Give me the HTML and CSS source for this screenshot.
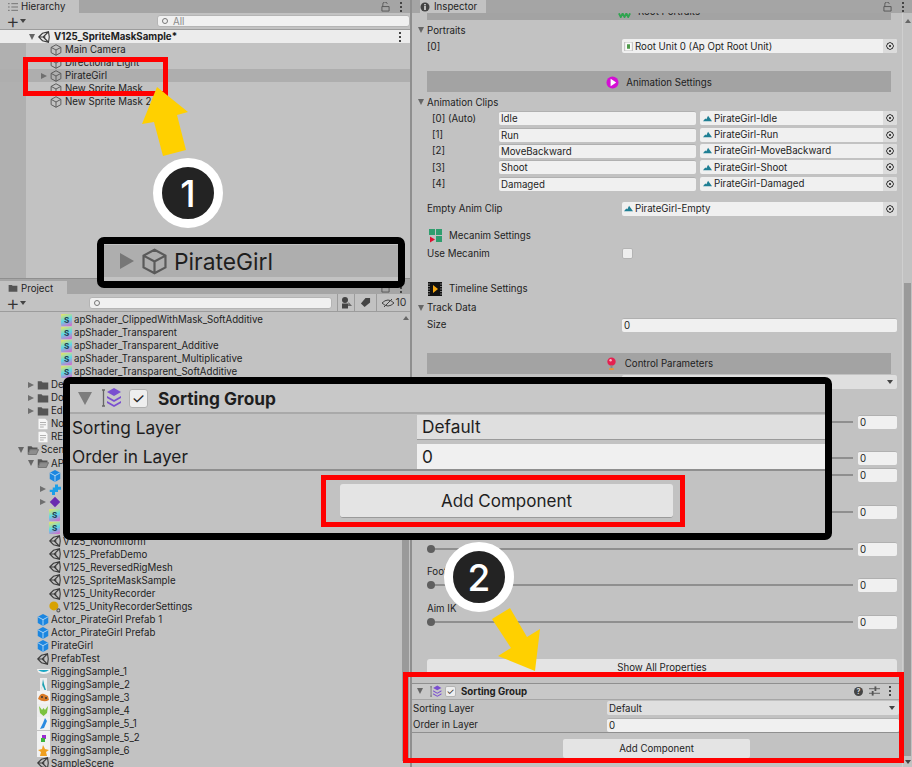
FILE: index.html
```html
<!DOCTYPE html>
<html lang="en">
<head>
    <meta charset="UTF-8">
    <meta name="viewport" content="width=device-width, initial-scale=1.0">
    <title>Sorting Group</title>
    <link rel="stylesheet" href="styles.css">
</head>
<body>

<!-- shared icons -->
<svg class="defs">
    <symbol id="cube" viewBox="0 0 16 16">
        <path d="M8 1 14.5 4.5V11.5L8 15 1.5 11.5V4.5ZM1.5 4.5 8 8 14.5 4.5M8 8V15" fill="none" stroke="#5a5a5a" stroke-width="1.3"/>
    </symbol>
    <symbol id="scene" viewBox="0 0 16 16">
        <path d="M1 8 6 3 14 1 15 8 14 15 6 13ZM1 8H7L14 1M7 8 14 15M7 8 10 8" fill="none" stroke="#3c3c3c" stroke-width="1.5"/>
    </symbol>
    <symbol id="prefab" viewBox="0 0 16 16">
        <path d="M8 0 15 3.6V12L8 16 1 12V3.6Z" fill="#1b86e0"/>
        <path d="M1.5 4 8 7.5 14.5 4M8 7.5V15.5" fill="none" stroke="#d8ecfb" stroke-width="1"/>
    </symbol>
    <symbol id="folder" viewBox="0 0 16 16">
        <path d="M1 3H6L7.5 4.5H15V14H1Z" fill="#555"/>
    </symbol>
    <symbol id="folder-open" viewBox="0 0 16 16">
        <path d="M1 3H6L7.5 4.5H14V7H4L1 14Z" fill="#555"/>
        <path d="M4 7.5H15.5L12.5 14H1.5Z" fill="#8d8d8d" stroke="#555" stroke-width=".8"/>
    </symbol>
    <symbol id="doc" viewBox="0 0 16 16">
        <path d="M2 1H11L14 4V15H2Z" fill="#f7f7f7"/>
        <path d="M4 6H12M4 9H12M4 12H9" stroke="#9a9a9a"/>
    </symbol>
    <symbol id="clip" viewBox="0 0 16 16">
        <path d="M0 13 4 8 6 9.5 9 3 16 13Z" fill="#1f7f94"/>
    </symbol>
    <symbol id="layers" viewBox="0 0 22 22">
        <path d="M2 3H5M3.5 3V19M2 19H5" fill="none" stroke="#666" stroke-width="1.3"/>
        <path d="M14 1 21 5 14 9 7 5Z" fill="#7a4fd0"/>
        <path d="M7 9 14 13 21 9 21 11 14 15 7 11Z" fill="#7a4fd0"/>
        <path d="M7 14 14 18 21 14 21 16 14 20 7 16Z" fill="#7a4fd0"/>
    </symbol>
</svg>

<div class="app">

    <div class="left-col">
        <!-- hierarchy -->
        <section class="panel hierarchy">
            <div class="tabbar">
                <div class="tab hier-tab">
                    <svg class="tab-ico" viewBox="0 0 12 10"><path d="M0 1H2M4 1H12M0 5H2M4 5H12M0 9H2M4 9H12" stroke="#666" stroke-width="1"/></svg>
                    Hierarchy
                </div>
                <div class="tab-tools">
                    <svg class="lock" viewBox="0 0 10 11"><path d="M2 5V3A2.5 2.5 0 0 1 7 2M1 5H9V10H1Z" fill="none" stroke="#555"/></svg>
                    <span class="dots"></span>
                </div>
            </div>
            <div class="toolbar">
                <span class="plus">+</span><i class="tri-down small"></i>
                <div class="search hier-search"><span class="mag"></span>All</div>
            </div>
            <div class="scene-head">
                <i class="tri-down"></i>
                <svg class="ico"><use href="#scene"/></svg>
                <b>V125_SpriteMaskSample*</b>
                <span class="dots"></span>
            </div>
            <div class="hier-rows">
                <div class="hrow"><span class="tw"></span><svg class="ico"><use href="#cube"/></svg>Main Camera</div>
                <div class="hrow"><span class="tw"></span><svg class="ico"><use href="#cube"/></svg>Directional Light</div>
                <div class="hrow selected"><span class="tw"><i class="tri-right"></i></span><svg class="ico"><use href="#cube"/></svg>PirateGirl</div>
                <div class="hrow"><span class="tw"></span><svg class="ico"><use href="#cube"/></svg>New Sprite Mask</div>
                <div class="hrow"><span class="tw"></span><svg class="ico"><use href="#cube"/></svg>New Sprite Mask 2</div>
            </div>
        </section>

        <!-- project -->
        <section class="panel project">
            <div class="tabbar">
                <div class="tab proj-tab">
                    <svg class="tab-ico"><use href="#folder"/></svg>
                    Project
                </div>
                <div class="tab-tools">
                    <svg class="lock" viewBox="0 0 10 11"><path d="M2 5V3A2.5 2.5 0 0 1 7 2M1 5H9V10H1Z" fill="none" stroke="#555"/></svg>
                    <span class="dots"></span>
                </div>
            </div>
            <div class="toolbar">
                <span class="plus">+</span><i class="tri-down small"></i>
                <div class="search proj-search"><span class="mag"></span></div>
                <div class="tool-btn by-type">
                    <svg viewBox="0 0 12 12" width="12" height="12"><circle cx="5" cy="3" r="3" fill="#444"/><rect x="2" y="6.5" width="6" height="5" fill="#444"/><path d="M8.5 5 12 9H8Z" fill="#666"/></svg>
                </div>
                <div class="tool-btn by-label">
                    <svg viewBox="0 0 12 12" width="11" height="11"><path d="M6 1H11V6L5 11 1 7Z" fill="#444"/></svg>
                </div>
                <div class="tool-btn hidden-count">
                    <svg viewBox="0 0 14 10" width="14" height="10"><path d="M1 5Q7-1 13 5 7 11 1 5ZM3 9 11 1" fill="none" stroke="#444"/></svg>
                    10
                </div>
            </div>
            <div class="file-area">
                <div class="file-list">
                    <div class="frow l2"><span class="tw"></span><span class="script">S</span>apShader_ClippedWithMask_SoftAdditive</div>
                    <div class="frow l2"><span class="tw"></span><span class="script">S</span>apShader_Transparent</div>
                    <div class="frow l2"><span class="tw"></span><span class="script">S</span>apShader_Transparent_Additive</div>
                    <div class="frow l2"><span class="tw"></span><span class="script">S</span>apShader_Transparent_Multiplicative</div>
                    <div class="frow l2"><span class="tw"></span><span class="script">S</span>apShader_Transparent_SoftAdditive</div>
                    <div class="frow l0"><span class="tw"><i class="tri-right"></i></span><svg class="ico"><use href="#folder"/></svg>De</div>
                    <div class="frow l0"><span class="tw"><i class="tri-right"></i></span><svg class="ico"><use href="#folder"/></svg>Do</div>
                    <div class="frow l0"><span class="tw"><i class="tri-right"></i></span><svg class="ico"><use href="#folder"/></svg>Ed</div>
                    <div class="frow l0"><span class="tw"></span><svg class="ico"><use href="#doc"/></svg>No</div>
                    <div class="frow l0"><span class="tw"></span><svg class="ico"><use href="#doc"/></svg>RE</div>
                    <div class="frow ls"><span class="tw"><i class="tri-down"></i></span><svg class="ico"><use href="#folder-open"/></svg>Scen</div>
                    <div class="frow l0"><span class="tw"><i class="tri-down"></i></span><svg class="ico"><use href="#folder-open"/></svg>AP</div>
                    <div class="frow l1"><span class="tw"></span><svg class="ico"><use href="#prefab"/></svg></div>
                    <div class="frow l1"><span class="tw"><i class="tri-right"></i></span>
                        <svg class="ico" viewBox="0 0 16 16"><path d="M1 9H5V6H8V2H12V5H16V9H12V12H8V16H4V12H1Z" fill="#1b9fe8"/></svg></div>
                    <div class="frow l1"><span class="tw"><i class="tri-right"></i></span>
                        <svg class="ico" viewBox="0 0 16 16"><path d="M8 1 15 8 8 15 1 8Z" fill="#6a2bb0"/></svg></div>
                    <div class="frow l1 thin"><span class="tw"></span><span class="script">S</span></div>
                    <div class="frow l1 thin"><span class="tw"></span><span class="script">S</span></div>
                    <div class="frow l1"><span class="tw"></span><svg class="ico"><use href="#scene"/></svg>V125_NonUniform</div>
                    <div class="frow l1"><span class="tw"></span><svg class="ico"><use href="#scene"/></svg>V125_PrefabDemo</div>
                    <div class="frow l1"><span class="tw"></span><svg class="ico"><use href="#scene"/></svg>V125_ReversedRigMesh</div>
                    <div class="frow l1"><span class="tw"></span><svg class="ico"><use href="#scene"/></svg>V125_SpriteMaskSample</div>
                    <div class="frow l1"><span class="tw"></span><svg class="ico"><use href="#scene"/></svg>V125_UnityRecorder</div>
                    <div class="frow l1"><span class="tw"></span>
                        <svg class="ico" viewBox="0 0 16 16"><circle cx="6.5" cy="6.5" r="6" fill="#d8a200"/><circle cx="12.5" cy="12.5" r="2" fill="none" stroke="#555" stroke-width="1.4"/></svg>V125_UnityRecorderSettings</div>
                    <div class="frow l0"><span class="tw"></span><svg class="ico"><use href="#prefab"/></svg>Actor_PirateGirl Prefab 1</div>
                    <div class="frow l0"><span class="tw"></span><svg class="ico"><use href="#prefab"/></svg>Actor_PirateGirl Prefab</div>
                    <div class="frow l0"><span class="tw"></span><svg class="ico"><use href="#prefab"/></svg>PirateGirl</div>
                    <div class="frow l0"><span class="tw"></span><svg class="ico"><use href="#scene"/></svg>PrefabTest</div>
                    <div class="frow l0"><span class="tw"></span>
                        <svg class="thumb" viewBox="0 0 13 13"><path d="M0 4H13V7Q6 11 1 7Z" fill="#f2f2f2"/><path d="M1 5H12Q7 9 1 5Z" fill="#19a6c4"/></svg>RiggingSample_1</div>
                    <div class="frow l0"><span class="tw"></span>
                        <svg class="thumb" viewBox="0 0 13 13"><rect x="3" width="7" height="13" fill="#eee"/><path d="M6 1 7 6 9 12H7.5L5.5 7 4.5 12Z" fill="#1a9fb0"/></svg>RiggingSample_2</div>
                    <div class="frow l0"><span class="tw"></span>
                        <svg class="thumb" viewBox="0 0 13 13"><rect width="13" height="13" fill="#f2f2f2"/><path d="M1 8Q3 2 7 3L11 5 12 9Q7 12 1 8Z" fill="#d87a28"/><circle cx="5" cy="6" r="1" fill="#333"/><circle cx="9" cy="7" r="1" fill="#333"/></svg>RiggingSample_3</div>
                    <div class="frow l0"><span class="tw"></span>
                        <svg class="thumb" viewBox="0 0 13 13"><rect width="13" height="13" fill="#eee"/><path d="M2 2 5 6 6.5 4 8 6 11 2 10 9 6.5 12 3 9Z" fill="#7cc23e"/></svg>RiggingSample_4</div>
                    <div class="frow l0"><span class="tw"></span>
                        <svg class="thumb" viewBox="0 0 13 13"><rect width="13" height="13" fill="#f2f2f2"/><path d="M8 1 10 4 7 11 3 12 6 6Z" fill="#2a8ae0"/></svg>RiggingSample_5_1</div>
                    <div class="frow l0"><span class="tw"></span>
                        <svg class="thumb" viewBox="0 0 13 13"><rect width="13" height="13" fill="#f2f2f2"/><rect x="5" y="4" width="4" height="4" fill="#9a2bd0"/><rect x="4" y="7" width="4" height="4" fill="#3cb43c"/></svg>RiggingSample_5_2</div>
                    <div class="frow l0"><span class="tw"></span>
                        <svg class="thumb" viewBox="0 0 13 13"><rect width="13" height="13" fill="#f2f2f2"/><path d="M6 1 8 5 12 6 9 8 10 12H3L4 8 1 6 5 5Z" fill="#efa020"/></svg>RiggingSample_6</div>
                    <div class="frow l0"><span class="tw"></span><svg class="ico"><use href="#scene"/></svg>SampleScene</div>
                </div>
                <div class="proj-scroll">
                    <i class="tri-up small"></i>
                    <div class="proj-thumb"></div>
                </div>
            </div>
        </section>
    </div>

    <!-- inspector -->
    <section class="panel inspector">
        <div class="tabbar">
            <div class="tab insp-tab">
                <svg class="tab-ico" viewBox="0 0 10 10"><circle cx="5" cy="5" r="4.5" fill="#444"/><rect x="4.2" y="4" width="1.6" height="4" fill="#ddd"/><rect x="4.2" y="2" width="1.6" height="1.4" fill="#ddd"/></svg>
                Inspector
            </div>
            <div class="tab-tools">
                <svg class="lock" viewBox="0 0 10 11"><path d="M2 5V3A2.5 2.5 0 0 1 7 2M1 5H9V10H1Z" fill="none" stroke="#555"/></svg>
                <span class="dots"></span>
            </div>
        </div>
        <div class="insp-body">
            <div class="insp-main">
                <div class="band band-first">
                    <svg class="band-ico" viewBox="0 0 14 14"><path d="M1 9 3 13 5 9 7 13 9 9 11 13 13 9" fill="none" stroke="#2fa44f" stroke-width="2"/></svg>
                    Root Portraits
                </div>
                <div class="prop fold mt2"><i class="tri-down"></i>Portraits</div>
                <div class="prop"><label>[0]</label>
                    <div class="objfield wide">
                        <svg class="obj-ico" viewBox="0 0 10 12"><rect width="10" height="12" fill="#fafafa" stroke="#aaa"/><rect x="3" y="3" width="4" height="6" fill="#4f9a4a"/></svg>
                        Root Unit 0 (Ap Opt Root Unit)<span class="pick"></span>
                    </div>
                </div>

                <div class="band mt17">
                    <svg class="band-ico" viewBox="0 0 14 14"><circle cx="7" cy="7" r="6.5" fill="#d40fd4"/><path d="M5 3 11 7 5 11Z" fill="#fff"/></svg>
                    Animation Settings
                </div>
                <div class="prop fold mt2"><i class="tri-down"></i>Animation Clips</div>
                <div class="clip-row"><span class="idx">[0] (Auto)</span><div class="text-field clip-name">Idle</div>
                    <div class="objfield clip-obj"><svg class="obj-ico"><use href="#clip"/></svg>PirateGirl-Idle<span class="pick"></span></div></div>
                <div class="clip-row"><span class="idx">[1]</span><div class="text-field clip-name">Run</div>
                    <div class="objfield clip-obj"><svg class="obj-ico"><use href="#clip"/></svg>PirateGirl-Run<span class="pick"></span></div></div>
                <div class="clip-row"><span class="idx">[2]</span><div class="text-field clip-name">MoveBackward</div>
                    <div class="objfield clip-obj"><svg class="obj-ico"><use href="#clip"/></svg>PirateGirl-MoveBackward<span class="pick"></span></div></div>
                <div class="clip-row"><span class="idx">[3]</span><div class="text-field clip-name">Shoot</div>
                    <div class="objfield clip-obj"><svg class="obj-ico"><use href="#clip"/></svg>PirateGirl-Shoot<span class="pick"></span></div></div>
                <div class="clip-row"><span class="idx">[4]</span><div class="text-field clip-name">Damaged</div>
                    <div class="objfield clip-obj"><svg class="obj-ico"><use href="#clip"/></svg>PirateGirl-Damaged<span class="pick"></span></div></div>

                <div class="prop mt9"><label>Empty Anim Clip</label>
                    <div class="objfield wide"><svg class="obj-ico"><use href="#clip"/></svg>PirateGirl-Empty<span class="pick"></span></div>
                </div>

                <div class="prop title mt11">
                    <svg class="title-ico" viewBox="0 0 14 14">
                        <rect x="1" y="0" width="6" height="6" fill="#2f9e6e"/><rect x="8" y="0" width="6" height="6" fill="#2f9e6e"/>
                        <rect x="8" y="7" width="6" height="6" fill="#2f9e6e"/><path d="M2 7.5 7 10.5 2 13.5Z" fill="#e01030"/>
                    </svg>Mecanim Settings
                </div>
                <div class="prop mt2"><label>Use Mecanim</label><span class="check"></span></div>

                <div class="prop title mt19">
                    <svg class="title-ico" viewBox="0 0 14 14">
                        <rect width="14" height="14" fill="#111"/><path d="M1 1.5V12.5M13 1.5V12.5" stroke="#ddd" stroke-dasharray="1 1.5"/><path d="M5 3 10 7 5 11Z" fill="#f4a814"/>
                    </svg>Timeline Settings
                </div>
                <div class="prop fold mt3"><i class="tri-down"></i>Track Data</div>
                <div class="prop mt1"><label>Size</label><div class="text-field wide">0</div></div>

                <div class="band mt20">
                    <svg class="band-ico" viewBox="0 0 14 14"><circle cx="7" cy="5" r="4.5" fill="#e5204f"/><circle cx="6" cy="3.5" r="1.3" fill="#f9b4c6"/><rect x="6" y="9" width="2" height="3" fill="#888"/><rect x="4.5" y="12" width="5" height="2" fill="#e8933c"/></svg>
                    Control Parameters
                </div>
                <div class="prop"><label></label><div class="dropdown wide end"><i class="tri-down small"></i></div></div>

                <div class="param first"><div class="slider"><span class="track"><i class="knob"></i></span><div class="text-field num">0</div></div></div>
                <div class="param"><div class="slider"><span class="track"><i class="knob"></i></span><div class="text-field num">0</div></div></div>
                <div class="param short"><div class="slider"><span class="track"><i class="knob"></i></span><div class="text-field num">0</div></div></div>
                <div class="param"><div class="slider"><span class="track"><i class="knob"></i></span><div class="text-field num">0</div></div></div>
                <div class="param"><div class="slider"><span class="track"><i class="knob"></i></span><div class="text-field num">0</div></div></div>
                <div class="param"><label>Foot</label><div class="slider"><span class="track"><i class="knob"></i></span><div class="text-field num">0</div></div></div>
                <div class="param"><label>Aim IK</label><div class="slider"><span class="track"><i class="knob"></i></span><div class="text-field num">0</div></div></div>

                <div class="show-all">Show All Properties</div>

                <div class="comp-head">
                    <i class="tri-down"></i>
                    <svg class="comp-ico"><use href="#layers"/></svg>
                    <span class="check checked">&#10003;</span>
                    <b>Sorting Group</b>
                    <span class="comp-tools">
                        <span class="help">?</span>
                        <svg viewBox="0 0 12 10" width="11" height="10"><path d="M0 2.5H12M0 7.5H12" stroke="#555"/><rect x="6" y="0" width="2" height="5" fill="#555"/><rect x="3" y="5" width="2" height="5" fill="#555"/></svg>
                        <span class="dots"></span>
                    </span>
                </div>
                <div class="comp-row"><label>Sorting Layer</label><div class="dropdown comp-field">Default<i class="tri-down small"></i></div></div>
                <div class="comp-row"><label>Order in Layer</label><div class="text-field comp-field">0</div></div>
                <div class="comp-foot"><div class="add-btn">Add Component</div></div>
            </div>
            <div class="insp-scroll">
                <i class="tri-up small"></i>
                <div class="insp-thumb"></div>
                <i class="tri-down small"></i>
            </div>
        </div>
    </section>
</div>

<!-- tutorial annotations lying over the editor -->
<svg class="arrow-two" viewBox="0 0 60 70" width="60" height="70"><path d="M4 14 22 3 39 32 52 24 47 66 10 51 23 43Z" fill="#ffd000"/></svg>

<div class="red-box box-hier"></div>
<div class="red-box box-comp"></div>

<svg class="arrow-one" viewBox="0 0 50 72" width="50" height="72"><path d="M16 0 47 25 36 28 45 63 22 69 13 35 1 37Z" fill="#ffd000"/></svg>

<div class="badge badge-one">1</div>
<div class="badge badge-two">2</div>

<div class="callout callout-girl">
    <div class="girl-row">
        <i class="big-tri"></i>
        <svg class="big-cube"><use href="#cube"/></svg>
        PirateGirl
    </div>
</div>

<div class="callout callout-group">
    <div class="group-head">
        <i class="big-tri down"></i>
        <svg class="big-layers"><use href="#layers"/></svg>
        <span class="big-check">&#10003;</span>
        <b>Sorting Group</b>
    </div>
    <div class="group-row"><label>Sorting Layer</label><div class="group-field drop">Default</div></div>
    <div class="group-row last"><label>Order in Layer</label><div class="group-field">0</div></div>
    <div class="group-foot">
        <div class="red-box box-add"><div class="big-add">Add Component</div></div>
    </div>
</div>

</body>
</html>
```
FILE: styles.css
```css
* {
    box-sizing: border-box;
}

html, body {
    margin: 0;
    padding: 0;
}

body {
    position: relative;
    width: 912px;
    height: 767px;
    overflow: hidden;
    font-family: "Inter", "Liberation Sans", sans-serif;
    font-size: 9.7px;
    color: #1e1e1e;
    background-color: #c2c2c2;
}

.defs {
    position: absolute;
    width: 0;
    height: 0;
}

.app {
    display: flex;
    height: 767px;
}

.left-col {
    display: flex;
    flex-direction: column;
    width: 412px;
    flex: none;
    border-right: 2px solid #8f8f8f;
}

.panel {
    display: flex;
    flex-direction: column;
    overflow: hidden;
}

.hierarchy {
    height: 279px;
    flex: none;
    border-bottom: 1px solid #8f8f8f;
}

.project {
    flex: 1;
}

.inspector {
    flex: 1;
}

/* tabs */
.tabbar {
    display: flex;
    justify-content: space-between;
    height: 13px;
    flex: none;
    background-color: #a5a5a5;
}

.project .tabbar {
    height: 15px;
    padding-top: 2px;
}

.tab {
    display: flex;
    align-items: center;
    gap: 3px;
    background-color: #c2c2c2;
    padding-left: 8px;
}

.hier-tab { width: 79px; }
.proj-tab { width: 67px; padding-top: 1px; }
.insp-tab { width: 66px; padding-left: 0; margin-left: 8px; gap: 4px; }

.tab-ico {
    width: 10px;
    height: 10px;
}

.tab-tools {
    display: flex;
    align-items: center;
    gap: 10px;
    padding-right: 8px;
}

.lock {
    width: 9px;
    height: 10px;
}

.dots {
    display: inline-block;
    width: 2px;
    height: 2px;
    background-color: #444;
    box-shadow: 0 -4px 0 #444, 0 4px 0 #444;
}

/* toolbars */
.toolbar {
    display: flex;
    align-items: center;
    height: 17px;
    flex: none;
    border-bottom: 1px solid #9c9c9c;
    padding-left: 6px;
}

.project .toolbar {
    height: 18px;
}

.plus {
    font-size: 21px;
    font-weight: 300;
    line-height: 14px;
    width: 14px;
    color: #333;
}

.search {
    display: flex;
    align-items: center;
    height: 12px;
    background-color: #f0f0f0;
    border-radius: 3px;
    border: 1px solid #b4b4b4;
    color: #8b8b8b;
    padding-left: 4px;
    gap: 5px;
}

.hier-search {
    margin-left: 131px;
    flex: 1;
}

.proj-search {
    margin-left: 63px;
    width: 243px;
}

.mag {
    width: 6px;
    height: 6px;
    border: 1px solid #777;
    border-radius: 50%;
}

.tool-btn {
    display: flex;
    align-items: center;
    justify-content: center;
    height: 17px;
    border-left: 1px solid #9c9c9c;
    color: #333;
}

.by-type { width: 17px; margin-left: 5px; }
.by-label { width: 22px; }
.hidden-count { flex: 1; gap: 1px; font-size: 10.5px; }

/* triangles */
.tri-down, .tri-right, .tri-up {
    display: inline-block;
    width: 0;
    height: 0;
    flex: none;
}

.tri-down {
    border-left: 3.5px solid transparent;
    border-right: 3.5px solid transparent;
    border-top: 6px solid #666;
}

.tri-right {
    border-top: 3.5px solid transparent;
    border-bottom: 3.5px solid transparent;
    border-left: 6px solid #6f6f6f;
}

.tri-up {
    border-left: 3px solid transparent;
    border-right: 3px solid transparent;
    border-bottom: 4px solid #666;
}

.tri-down.small {
    border-left-width: 3px;
    border-right-width: 3px;
    border-top-width: 4px;
    border-top-color: #444;
}

/* hierarchy rows */
.scene-head {
    display: flex;
    align-items: center;
    height: 13px;
    flex: none;
    background-color: #ececec;
    padding-left: 29px;
    padding-right: 9px;
}

.scene-head .ico {
    margin: 0 4px 0 3px;
}

.scene-head b {
    flex: 1;
}

.hier-rows {
    flex: 1;
    background: linear-gradient(to right, #b0b0b0 26px, #c2c2c2 26px);
}

.hrow {
    display: flex;
    align-items: center;
    height: 13px;
    padding-left: 41px;
}

.hrow.selected {
    background-color: #aeaeae;
}

.tw {
    display: flex;
    align-items: center;
    width: 9px;
    flex: none;
}

.ico {
    width: 12px;
    height: 12px;
    flex: none;
    margin-right: 3px;
}

/* project rows */
.file-area {
    display: flex;
    flex: 1;
    overflow: hidden;
}

.file-list {
    flex: 1;
    padding-top: 1px;
}

.frow {
    display: flex;
    align-items: center;
    height: 13.05px;
    white-space: nowrap;
}

.frow .ico {
    margin-right: 2px;
}

.ls { padding-left: 18px; }
.l0 { padding-left: 28px; }
.l1 { padding-left: 40px; }
.l2 { padding-left: 52px; }

.script {
    display: flex;
    align-items: center;
    justify-content: center;
    width: 11px;
    height: 12px;
    flex: none;
    margin-right: 2px;
    font-size: 8px;
    font-weight: 700;
    color: #1c3c50;
    border-radius: 1px;
    background: linear-gradient(160deg, #eee45e, #5fd6e6 50%, #de62c8);
}

.thumb {
    width: 13px;
    height: 13px;
    flex: none;
    margin-right: 1px;
}

.proj-scroll {
    display: flex;
    flex-direction: column;
    align-items: center;
    width: 9px;
    flex: none;
    padding-top: 4px;
}

.proj-thumb {
    width: 7px;
    margin-top: 80px;
    flex: 1;
    margin-bottom: 6px;
    background-color: #9a9a9a;
}

/* inspector */
.insp-body {
    display: flex;
    flex: 1;
    overflow: hidden;
}

.insp-main {
    flex: 1;
    min-width: 0;
}

.band {
    display: flex;
    align-items: center;
    justify-content: center;
    gap: 7px;
    height: 21px;
    padding-top: 1px;
    margin: 0 11px 0 15px;
    background-color: #a3a3a3;
}

.band-first {
    margin-top: -14px;
    padding-top: 3px;
}

.band-ico {
    width: 13px;
    height: 13px;
    flex: none;
}

.mt1 { margin-top: 1px; }
.mt2 { margin-top: 2px; }
.mt3 { margin-top: 3px; }
.mt9 { margin-top: 9px; }
.mt11 { margin-top: 11px; }
.mt17 { margin-top: 17px; }
.mt19 { margin-top: 19px; }
.mt20 { margin-top: 20px; }

.prop {
    display: flex;
    align-items: center;
    height: 16px;
    padding-left: 15px;
    padding-right: 5px;
}

.prop label {
    width: 195px;
    flex: none;
}

.fold {
    padding-left: 6px;
    gap: 3px;
}

.title {
    gap: 7px;
    padding-left: 16px;
}

.title-ico {
    width: 14px;
    height: 14px;
    flex: none;
}

.text-field, .objfield, .dropdown {
    display: flex;
    align-items: center;
    height: 14px;
    padding-left: 2px;
    border-radius: 2px;
    white-space: nowrap;
    overflow: hidden;
}

.text-field {
    background-color: #f0f0f0;
    border-top: 1px solid #b0b0b0;
}

.objfield {
    position: relative;
    background-color: #f0f0f0;
}

.dropdown {
    justify-content: space-between;
    padding-right: 4px;
    background-color: #dfdfdf;
}

.dropdown.end {
    justify-content: flex-end;
}

.wide {
    flex: 1;
}

.obj-ico {
    width: 9px;
    height: 9px;
    flex: none;
    margin-right: 2px;
}

.pick {
    position: absolute;
    right: 0;
    top: 0;
    width: 14px;
    height: 100%;
    background: radial-gradient(circle, #444 1.2px, #dcdcdc 1.4px, #dcdcdc 2.5px, #555 2.8px, #555 3.6px, #dcdcdc 3.9px);
}

.clip-row {
    display: flex;
    align-items: center;
    height: 16.4px;
    padding-left: 20px;
    padding-right: 5px;
}

.idx {
    width: 67px;
    flex: none;
}

.clip-name {
    width: 197px;
    flex: none;
}

.clip-obj {
    flex: 1;
    margin-left: 4px;
    padding-left: 3px;
}

.check {
    display: flex;
    align-items: center;
    justify-content: center;
    width: 11px;
    height: 11px;
    border-radius: 2px;
    background-color: #eeeeee;
    border: 1px solid #b4b4b4;
    font-size: 9px;
    line-height: 9px;
}

/* sliders */
.param {
    display: flex;
    flex-direction: column;
    justify-content: flex-end;
    height: 36.67px;
    padding-left: 15px;
    padding-right: 5px;
}

.param.first {
    margin-top: 3px;
}

.param.short {
    height: 17px;
}

.slider {
    display: flex;
    align-items: center;
    gap: 5px;
    height: 16px;
    flex: none;
}

.track {
    position: relative;
    flex: 1;
    height: 2px;
    background-color: #8f8f8f;
}

.knob {
    position: absolute;
    left: 0;
    top: -3px;
    width: 8px;
    height: 8px;
    border-radius: 50%;
    background-color: #5f5f5f;
}

.num {
    width: 39px;
    flex: none;
    margin: 0;
}

.show-all {
    display: flex;
    align-items: center;
    justify-content: center;
    height: 18px;
    margin: 29px 5px 0 15px;
    border-radius: 3px 3px 0 0;
    background-color: #e4e4e4;
}

/* sorting group component */
.comp-head {
    display: flex;
    align-items: center;
    height: 17px;
    margin-top: 6px;
    padding-left: 5px;
    padding-right: 11px;
    border-top: 1px solid #8f8f8f;
    border-bottom: 1px solid #a6a6a6;
    background-color: #c8c8c8;
}

.comp-ico {
    width: 13px;
    height: 13px;
    margin: 0 3px 0 6px;
    flex: none;
}

.comp-head b {
    flex: 1;
    margin-left: 5px;
}

.comp-tools {
    display: flex;
    align-items: center;
    gap: 9px;
}

.help {
    display: flex;
    align-items: center;
    justify-content: center;
    width: 9px;
    height: 9px;
    margin-right: -3px;
    border-radius: 50%;
    background-color: #444;
    color: #ddd;
    font-size: 7px;
    font-weight: 700;
}

.comp-row {
    display: flex;
    align-items: center;
    height: 16.5px;
    padding-left: 1px;
    padding-right: 3px;
}

.comp-row label {
    width: 194px;
    flex: none;
}

.comp-field {
    flex: 1;
}

.comp-foot {
    display: flex;
    justify-content: center;
    padding-top: 6px;
    margin-top: -1px;
    border-top: 1px solid #8f8f8f;
}

.add-btn {
    display: flex;
    align-items: center;
    justify-content: center;
    width: 187px;
    height: 19px;
    border-radius: 2px;
    background-color: #e4e4e4;
    margin-right: 1px;
}

.insp-scroll {
    display: flex;
    flex-direction: column;
    align-items: center;
    width: 10px;
    flex: none;
    padding: 6px 0 3px;
    border-left: 1px solid #cfcfcf;
}

.insp-thumb {
    flex: 1;
    width: 7px;
    margin: 260px 0 4px;
    background-color: #9a9a9a;
}

/* annotations */
.red-box {
    position: absolute;
    border: 5px solid #ff0000;
}

.box-hier {
    left: 23px;
    top: 57px;
    width: 145px;
    height: 39px;
}

.box-comp {
    left: 403px;
    top: 672px;
    width: 501px;
    height: 91px;
}

.arrow-one {
    position: absolute;
    left: 141px;
    top: 87px;
}

.arrow-two {
    position: absolute;
    left: 488px;
    top: 605px;
}

.badge {
    position: absolute;
    display: flex;
    align-items: center;
    justify-content: center;
    width: 70px;
    height: 70px;
    border-radius: 50%;
    border: 9px solid #fff;
    background-color: #232323;
    color: #fff;
    font-size: 37px;
    font-weight: 500;
}

.badge-one {
    left: 153px;
    top: 158px;
}

.badge-two {
    left: 444px;
    top: 542px;
}

.callout {
    position: absolute;
    border: 7px solid #000;
    border-radius: 7px;
    overflow: hidden;
    background-color: #c2c2c2;
}

.callout-girl {
    left: 97px;
    top: 237px;
    width: 308px;
    height: 51px;
    padding: 1px 0 3px;
}

.girl-row {
    display: flex;
    align-items: center;
    height: 32px;
    padding-left: 16px;
    font-size: 22.8px;
    background-color: #aeaeae;
}

.big-tri {
    width: 0;
    height: 0;
    flex: none;
    border-top: 8px solid transparent;
    border-bottom: 8px solid transparent;
    border-left: 14px solid #777;
}

.big-tri.down {
    border-left: 7px solid transparent;
    border-right: 7px solid transparent;
    border-top: 13px solid #7d7d7d;
    border-bottom: 0;
}

.big-cube {
    width: 27px;
    height: 27px;
    flex: none;
    margin: 0 6px 0 7px;
}

.callout-group {
    left: 63px;
    top: 377px;
    width: 769px;
    height: 163px;
    font-size: 17.3px;
}

.group-head {
    display: flex;
    align-items: center;
    height: 30px;
    padding-left: 8px;
    border-bottom: 2px solid #a9a9a9;
    background-color: #c8c8c8;
}

.big-layers {
    width: 22px;
    height: 22px;
    flex: none;
    margin: 0 7px 0 8px;
}

.big-check {
    display: flex;
    align-items: center;
    justify-content: center;
    width: 19px;
    height: 19px;
    margin-right: 10px;
    border: 1px solid #b0b0b0;
    border-radius: 3px;
    background-color: #eee;
    font-size: 15px;
}

.group-row {
    display: flex;
    align-items: center;
    height: 26px;
    padding-left: 2px;
}

.group-row.last {
    height: 27px;
    margin-top: 4px;
    border-bottom: 2px solid #8f8f8f;
}

.group-row label {
    width: 345px;
    flex: none;
}

.group-field {
    flex: 1;
    display: flex;
    align-items: center;
    height: 25px;
    padding-left: 5px;
    background-color: #f0f0f0;
}

.group-field.drop {
    background-color: #dfdfdf;
    border-bottom: 1px solid #9a9a9a;
}

.group-foot {
    position: relative;
}

.box-add {
    left: 251px;
    top: 4px;
    width: 364px;
    height: 52px;
    display: flex;
    align-items: center;
    padding-left: 14px;
}

.big-add {
    display: flex;
    align-items: center;
    justify-content: center;
    width: 333px;
    height: 34px;
    border-radius: 3px;
    background-color: #e4e4e4;
    border-bottom: 1px solid #9a9a9a;
    font-size: 17px;
}
```
